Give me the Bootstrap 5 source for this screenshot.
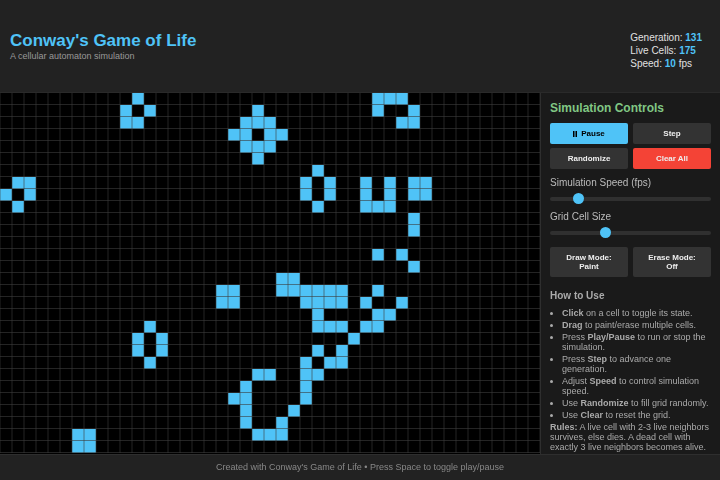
<!DOCTYPE html>
<html lang="en">
<head>
<meta charset="utf-8">
<meta name="viewport" content="width=device-width, initial-scale=1">
<title>Conway's Game of Life</title>
<link href="https://cdn.jsdelivr.net/npm/bootstrap@5.3.0/dist/css/bootstrap.min.css" rel="stylesheet">
<style>
body { background: #121212; color: #e0e0e0; font-family: "Liberation Sans", Arial, sans-serif; font-size: 12px; line-height: 14px; }
.page-head { background: #222; padding: 31px 18px 22px 10px; border-bottom: 1px solid #2a2a2a; }
.page-head h1 { color: #4fc3f7; font-size: 17px; line-height: 20px; }
.page-head p { color: #999; font-size: 9px; line-height: 10px; }
.stats { font-size: 10px; line-height: 13px; }
.stats strong { color: #4fc3f7; }
.board { background: #000; min-width: 0; }
.side { background: #1a1a1a; border-left: 1px solid #2e2e2e; flex: 0 0 180px; padding: 7px 9px 0; }
.side h2 { color: #81c784; font-size: 12px; line-height: 16px; margin-bottom: 7px; }
.pair { display: grid; grid-template-columns: 1fr 1fr; gap: 4px 5px; }
.ctl { --bs-btn-bg: #333; --bs-btn-color: #eee; --bs-btn-border-width: 0; --bs-btn-border-radius: 2px; --bs-btn-font-size: 8px; --bs-btn-font-weight: 700; --bs-btn-line-height: 9px; --bs-btn-padding-x: 12px; --bs-btn-padding-y: 6px; --bs-btn-hover-bg: #444; --bs-btn-hover-color: #fff; }
.ctl-main { --bs-btn-bg: #4fc3f7; --bs-btn-color: #000; }
.ctl-stop { --bs-btn-bg: #f44336; }
.side label { color: #bbb; font-size: 10px; line-height: 12px; }
.field + .field { margin-top: 6px; }
.slider { display: block; width: 100%; height: 12px; margin: 0; appearance: none; background: transparent; }
.slider::-webkit-slider-runnable-track { height: 4px; background: #303030; border-radius: 2px; }
.slider::-webkit-slider-thumb { appearance: none; width: 11px; height: 11px; margin-top: -4px; background: #4fc3f7; border-radius: 50%; }
.side h3 { color: #aaa; font-size: 10px; line-height: 12px; margin: 13px 0 6px; }
.help { color: #aaa; font-size: 9px; line-height: 10px; }
.help ul { padding-left: 12px; }
.help li { margin-bottom: 2px; }
.page-foot { background: #222; color: #888; border-top: 1px solid #2e2e2e; font-size: 9px; line-height: 11px; padding: 7px; }
</style>
<script src="https://cdn.jsdelivr.net/npm/bootstrap@5.3.0/dist/js/bootstrap.bundle.min.js" defer></script>
</head>
<body class="d-flex flex-column min-vh-100">
<header class="page-head d-flex justify-content-between align-items-start">
  <div>
    <h1 class="fw-bold mb-0">Conway's Game of Life</h1>
    <p class="mb-0">A cellular automaton simulation</p>
  </div>
  <div class="stats">
    <div>Generation: <strong>131</strong></div>
    <div>Live Cells: <strong>175</strong></div>
    <div>Speed: <strong>10</strong> fps</div>
  </div>
</header>
<main class="d-flex flex-grow-1">
  <div class="board flex-grow-1 overflow-hidden"><canvas id="life" class="d-block" width="540" height="360" role="img" aria-label="Cell grid"></canvas></div>
  <aside class="side">
    <h2 class="fw-bold">Simulation Controls</h2>
    <div class="pair">
      <button type="button" class="btn ctl ctl-main"><svg class="me-1" width="4" height="6" viewBox="0 0 4 6" fill="currentColor" aria-hidden="true"><path d="M0 0h1.5v6H0zM2.5 0H4v6H2.5z"/></svg>Pause</button>
      <button type="button" class="btn ctl">Step</button>
      <button type="button" class="btn ctl">Randomize</button>
      <button type="button" class="btn ctl ctl-stop">Clear All</button>
    </div>
    <div class="field mt-2">
      <label for="speed" class="d-block mb-1">Simulation Speed (fps)</label>
      <input class="slider" type="range" id="speed" min="1" max="60" value="10">
    </div>
    <div class="field">
      <label for="size" class="d-block mb-1">Grid Cell Size</label>
      <input class="slider" type="range" id="size" min="7" max="22" value="12">
    </div>
    <div class="pair mt-2">
      <button type="button" class="btn ctl">Draw Mode: Paint</button>
      <button type="button" class="btn ctl">Erase Mode: Off</button>
    </div>
    <h3 class="fw-bold">How to Use</h3>
    <div class="help">
      <ul class="mb-0">
        <li><strong>Click</strong> on a cell to toggle its state.</li>
        <li><strong>Drag</strong> to paint/erase multiple cells.</li>
        <li>Press <strong>Play/Pause</strong> to run or stop the simulation.</li>
        <li>Press <strong>Step</strong> to advance one generation.</li>
        <li>Adjust <strong>Speed</strong> to control simulation speed.</li>
        <li>Use <strong>Randomize</strong> to fill grid randomly.</li>
        <li>Use <strong>Clear</strong> to reset the grid.</li>
      </ul>
      <p class="mb-0"><strong>Rules:</strong> A live cell with 2-3 live neighbors survives, else dies. A dead cell with exactly 3 live neighbors becomes alive.</p>
    </div>
  </aside>
</main>
<footer class="page-foot text-center">Created with Conway's Game of Life • Press Space to toggle play/pause</footer>
<script>
// Live columns of each grid row, top to bottom
const live = [
  [11,31,32,33], [10,12,21,31,34], [10,11,20,21,22,33,34], [19,20,22,23], [20,21,22], [21], [26],
  [1,2,25,27,30,32,34,35], [0,2,25,27,30,32,34,35], [1,26,30,31,32], [34], [34], [], [31,33], [34],
  [23,24], [18,19,23,24,25,26,27,28,31], [18,19,25,26,27,28,30,33], [26,31,32], [12,26,27,28,30,31],
  [11,13,29], [11,13,26,28], [12,25,27,28], [21,22,25,26], [20,25], [19,20,25], [20,24], [20,23],
  [6,7,21,22,23], [6,7]
];
const cell = 12;
const canvas = document.getElementById('life');
const ctx = canvas.getContext('2d');
function draw() {
  canvas.width = canvas.parentElement.clientWidth;
  canvas.height = live.length * cell;
  ctx.fillStyle = '#4fc3f7';
  live.forEach((row, y) => row.forEach(x => ctx.fillRect(x * cell, y * cell, cell, cell)));
  ctx.strokeStyle = 'rgba(60, 60, 60, .6)';
  ctx.beginPath();
  for (let x = 0; x <= canvas.width; x += cell) { ctx.moveTo(x, 0); ctx.lineTo(x, canvas.height); }
  for (let y = cell; y <= canvas.height; y += cell) { ctx.moveTo(0, y - .5); ctx.lineTo(canvas.width, y - .5); }
  ctx.stroke();
}
draw();
addEventListener('resize', draw);
</script>
</body>
</html>
